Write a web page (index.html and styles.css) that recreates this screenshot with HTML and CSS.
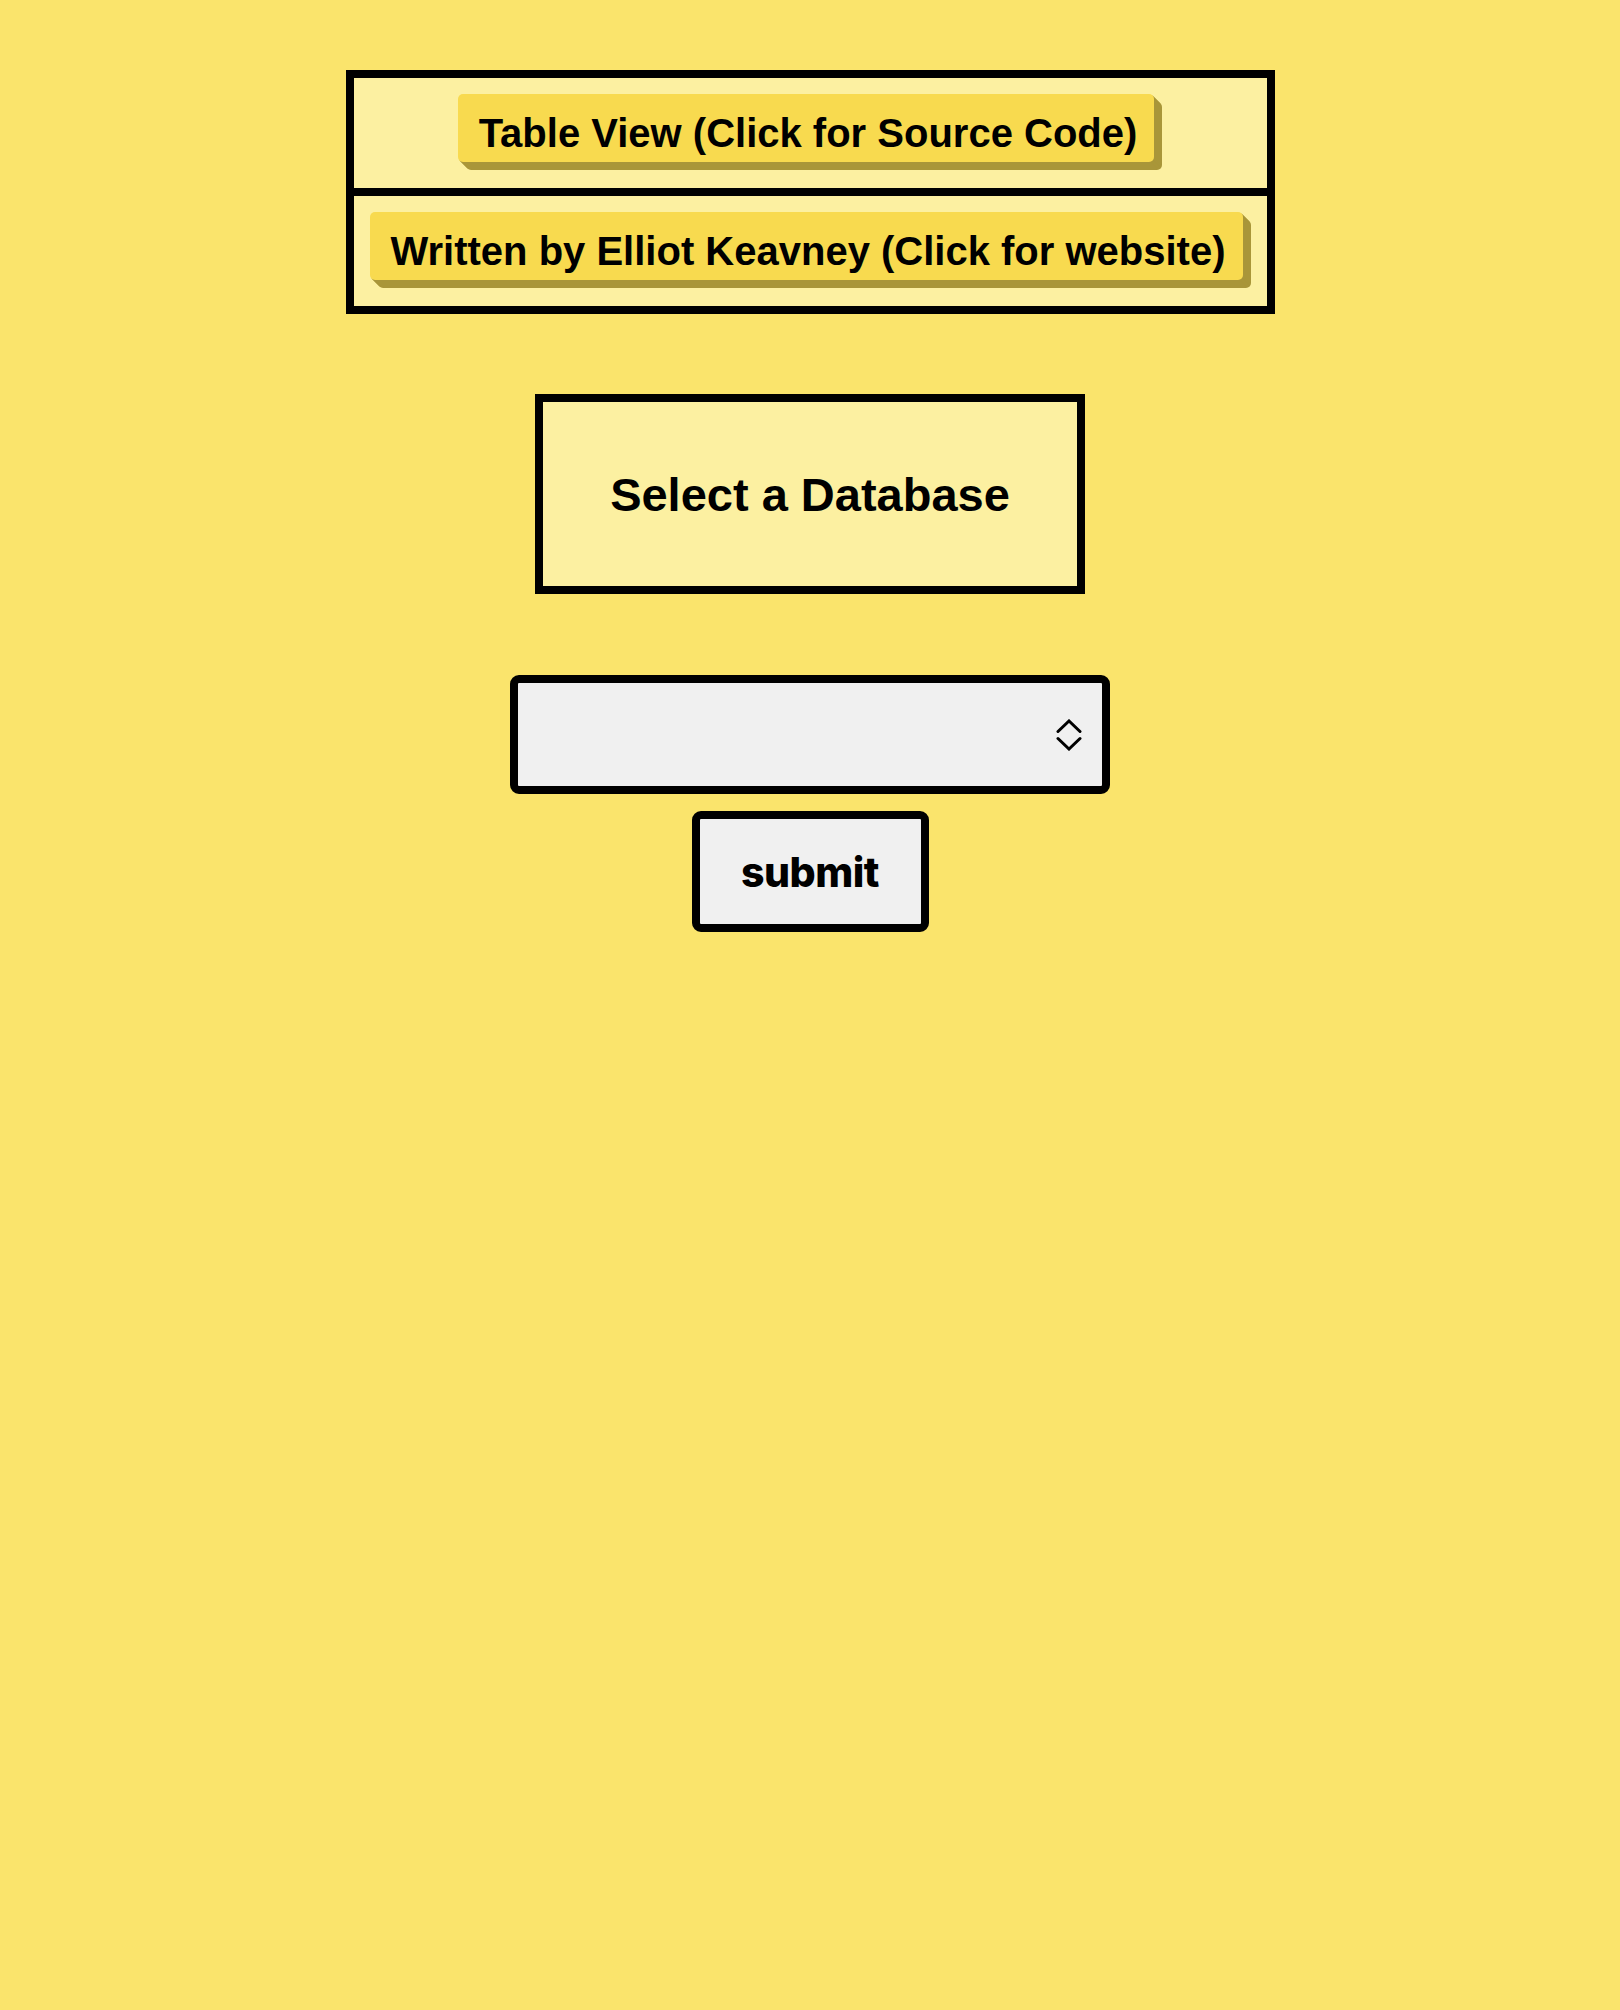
FILE: index.html
```html
<!DOCTYPE html>
<html lang="en">
<head>
<meta charset="utf-8">
<title>Table View</title>
<link rel="stylesheet" href="styles.css">
</head>
<body>
<div class="page">
  <div class="header-box">
    <div class="header-row">
      <a class="btn3d" href="#">Table View (Click for Source Code)</a>
    </div>
    <div class="header-row header-row--divided">
      <a class="btn3d" href="#">Written by Elliot Keavney (Click for website)</a>
    </div>
  </div>
  <h1 class="title-box">Select a Database</h1>
  <form class="db-form">
    <div class="select-wrap">
      <select class="db-select" name="db"></select>
      <svg class="select-chevron" width="28" height="32" viewBox="0 0 28 32" aria-hidden="true">
        <polyline points="3,12.5 14,2 25,12.5" fill="none" stroke="#000" stroke-width="3" stroke-linecap="round" stroke-linejoin="miter"/>
        <polyline points="3,19.5 14,30 25,19.5" fill="none" stroke="#000" stroke-width="3" stroke-linecap="round" stroke-linejoin="miter"/>
      </svg>
    </div>
    <button class="submit-btn" type="submit">submit</button>
  </form>
</div>
</body>
</html>
```

FILE: styles.css
```css
html, body {
  margin: 0;
  padding: 0;
}

body {
  background: #fae46c;
  font-family: "Liberation Sans", Arial, sans-serif;
  color: #000;
}

.page {
  display: flex;
  flex-direction: column;
  align-items: center;
  padding-top: 70px;
  min-height: 2010px;
  box-sizing: border-box;
}

.header-box {
  display: flex;
  flex-direction: column;
  border: 8px solid #000;
  background: #fcf0a1;
}

.header-row {
  display: flex;
  justify-content: center;
  padding: 16px 16px 18px;
}

.header-row--divided {
  border-top: 8px solid #000;
}

.btn3d {
  display: block;
  font-size: 40px;
  font-weight: 700;
  line-height: 48px;
  color: #000;
  text-decoration: none;
  white-space: nowrap;
  background: #f8da4f;
  border-radius: 5px;
  padding: 15px 17px 5px 21px;
  margin: 0 8px 8px 0;
  box-shadow:
    1px 1px 0 #a99639,
    2px 2px 0 #a99639,
    3px 3px 0 #a99639,
    4px 4px 0 #a99639,
    5px 5px 0 #a99639,
    6px 6px 0 #a99639,
    7px 7px 0 #a99639,
    8px 8px 0 #a99639;
}

.title-box {
  box-sizing: border-box;
  width: 550px;
  height: 200px;
  margin: 80px 0 0;
  border: 8px solid #000;
  background: #fcf0a1;
  display: flex;
  align-items: center;
  justify-content: center;
  padding-top: 1px;
  font-size: 47px;
  font-weight: 700;
}

.db-form {
  display: flex;
  flex-direction: column;
  align-items: center;
  margin-top: 81px;
}

.select-wrap {
  position: relative;
  width: 600px;
  height: 119px;
}

.db-select {
  appearance: none;
  -webkit-appearance: none;
  box-sizing: border-box;
  width: 100%;
  height: 100%;
  margin: 0;
  border: 8px solid #000;
  border-radius: 9px;
  background: #f0f0f0;
  font-family: Inter, "Liberation Sans", sans-serif;
  font-size: 32px;
  padding: 0 60px 0 20px;
}

.select-chevron {
  position: absolute;
  right: 27px;
  top: 44px;
  pointer-events: none;
}

.submit-btn {
  box-sizing: border-box;
  width: 237px;
  height: 121px;
  margin-top: 17px;
  border: 8px solid #000;
  border-radius: 9px;
  background: #f0f0f0;
  color: #000;
  font-family: Inter, "Liberation Sans", sans-serif;
  font-size: 41px;
  font-weight: 800;
  letter-spacing: -0.5px;
  padding: 1px 0 0;
}
```
